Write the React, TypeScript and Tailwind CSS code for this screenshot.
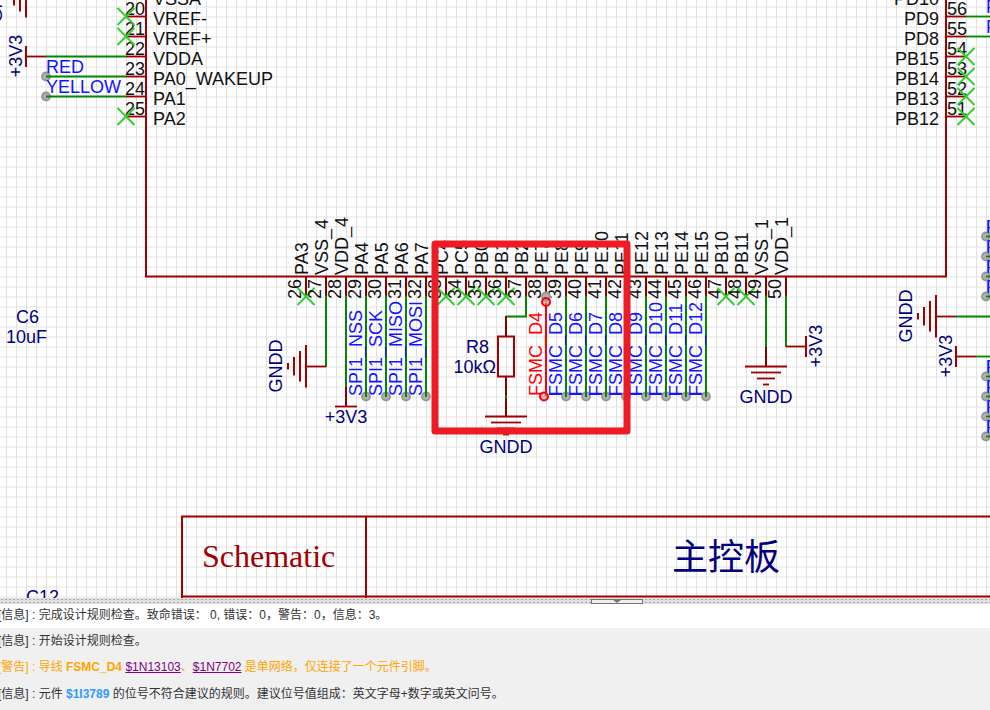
import React from "react";

const RED = "#a00000";
const PIN = "#880000";
const GREEN = "#008800";
const NAVY = "#000080";
const BLUE = "#1414ff";
const MARK = "#33cc33";

type LabelProps = {
  x: number;
  y: number;
  children: string;
  fill?: string;
  anchor?: "start" | "middle" | "end";
  up?: boolean;
};

function Label({ x, y, children, fill = "#111111", anchor = "start", up = false }: LabelProps) {
  return (
    <text
      x={x}
      y={y}
      fill={fill}
      textAnchor={anchor}
      transform={up ? `rotate(-90 ${x} ${y})` : undefined}
      className="text-[18px]"
    >
      {children}
    </text>
  );
}

type SegProps = { x1: number; y1: number; x2: number | string; y2: number; c: string; w?: number };

function Seg({ x1, y1, x2, y2, c, w = 2 }: SegProps) {
  return <line x1={x1} y1={y1} x2={x2} y2={y2} stroke={c} strokeWidth={w} />;
}

function NoConnect({ x, y }: { x: number; y: number }) {
  return (
    <path
      d={`M${x - 8.5} ${y - 8}l17 17M${x + 8.5} ${y - 8}l-17 17`}
      stroke={MARK}
      strokeWidth="2"
      fill="none"
    />
  );
}

function Dot({ x, y }: { x: number; y: number }) {
  return <circle cx={x} cy={y + 0.5} r="4" fill="#b0b0b0" stroke="#969696" strokeWidth="1.8" />;
}

/* Ground symbol: four shrinking bars, pointing down or left. */
function Ground({ x, y, left = false }: { x: number; y: number; left?: boolean }) {
  return (
    <g>
      {[21, 15, 9, 3].map((half, i) =>
        left ? (
          <Seg key={i} x1={x - i * 6} y1={y - half} x2={x - i * 6} y2={y + half + 0.5} c={RED} />
        ) : (
          <Seg key={i} x1={x - half} y1={y + i * 6 + 0.5} x2={x + half} y2={y + i * 6 + 0.5} c={RED} w={1.8} />
        )
      )}
    </g>
  );
}

const bottomPins = [
  "PA3", "VSS_4", "VDD_4", "PA4", "PA5", "PA6", "PA7", "PC4", "PC5", "PB0", "PB1", "PB2", "PE7",
  "PE8", "PE9", "PE10", "PE11", "PE12", "PE13", "PE14", "PE15", "PB10", "PB11", "VSS_1", "VDD_1",
].map((name, i) => ({ name, num: 26 + i, x: 306 + 20 * i }));

const openPins = [26, 33, 34, 35, 36, 47, 48];

const nets = [
  { name: "SPI1_NSS", x: 366 },
  { name: "SPI1_SCK", x: 386 },
  { name: "SPI1_MISO", x: 406 },
  { name: "SPI1_MOSI", x: 426 },
  { name: "FSMC_D5", x: 566 },
  { name: "FSMC_D6", x: 586 },
  { name: "FSMC_D7", x: 606 },
  { name: "FSMC_D8", x: 626 },
  { name: "FSMC_D9", x: 646 },
  { name: "FSMC_D10", x: 666 },
  { name: "FSMC_D11", x: 686 },
  { name: "FSMC_D12", x: 706 },
];

const leftPins = ["VSSA", "VREF-", "VREF+", "VDDA", "PA0_WAKEUP", "PA1", "PA2"].map((name, i) => ({
  name,
  num: 19 + i,
  y: -4 + 20 * i,
}));

const rightPins = ["PD10", "PD9", "PD8", "PB15", "PB14", "PB13", "PB12"].map((name, i) => ({
  name,
  num: 57 - i,
  y: -4 + 20 * i,
}));

function Schematic() {
  return (
    <svg
      className="block h-full w-full font-['Liberation_Sans','Noto_Sans_CJK_SC',sans-serif]"
      role="img"
      aria-label="Schematic"
    >
      <defs>
        <pattern id="grid" width="10" height="10" patternUnits="userSpaceOnUse">
          <rect x="0" y="6" width="10" height="2" fill="#f1f1f1" />
          <rect x="6" y="0" width="1" height="10" fill="#e0e0e0" />
        </pattern>
      </defs>
      <rect width="100%" height="100%" fill="#ffffff" />
      <rect width="100%" height="100%" fill="url(#grid)" />

      {/* chip outline */}
      <path d="M146 -10V276.5H946V-10" fill="none" stroke={RED} strokeWidth="2" />

      {/* left side pins */}
      {leftPins.map((p) => (
        <g key={p.num}>
          <Seg x1={126} y1={p.y + 0.5} x2={146} y2={p.y + 0.5} c={RED} w={1.8} />
          <Label x={145} y={p.y - 1} anchor="end">{String(p.num)}</Label>
          <Label x={153} y={p.y + 9}>{p.name}</Label>
        </g>
      ))}
      <NoConnect x={126} y={16} />
      <NoConnect x={126} y={36} />
      <NoConnect x={126} y={116} />
      <Seg x1={46} y1={56.5} x2={126} y2={56.5} c={GREEN} w={1.8} />
      <Seg x1={26} y1={56.5} x2={46} y2={56.5} c={RED} w={1.8} />
      <Seg x1={26} y1={46} x2={26} y2={67} c={RED} />
      <Label x={22} y={56} up anchor="middle" fill={NAVY}>+3V3</Label>
      <Dot x={46} y={76} />
      <Dot x={46} y={96} />
      <Seg x1={46} y1={76.5} x2={126} y2={76.5} c={GREEN} w={1.8} />
      <Seg x1={46} y1={96.5} x2={126} y2={96.5} c={GREEN} w={1.8} />
      <Label x={46} y={73} fill={BLUE}>RED</Label>
      <Label x={46} y={93} fill={BLUE}>YELLOW</Label>
      <Ground x={26} y={-4} left />
      <Label x={2} y={-4} up anchor="middle" fill={NAVY}>GNDD</Label>

      {/* right side pins */}
      {rightPins.map((p) => (
        <g key={p.num}>
          <Seg x1={946} y1={p.y + 0.5} x2={966} y2={p.y + 0.5} c={RED} w={1.8} />
          <Label x={947} y={p.y - 1}>{String(p.num)}</Label>
          <Label x={939} y={p.y + 9} anchor="end">{p.name}</Label>
        </g>
      ))}
      {[56, 76, 96, 116].map((y) => (
        <NoConnect key={y} x={966} y={y} />
      ))}
      {[16, 36].map((y) => (
        <g key={y}>
          <Seg x1={966} y1={y + 0.5} x2="100%" y2={y + 0.5} c={GREEN} w={1.8} />
          <Label x={986} y={y - 3} fill={BLUE}>F</Label>
        </g>
      ))}

      {/* bottom pins */}
      {bottomPins.map((p) => (
        <g key={p.num}>
          <Seg x1={p.x} y1={276} x2={p.x} y2={296} c={PIN} />
          <Label x={p.x - 5} y={299} up>{String(p.num)}</Label>
          <Label x={p.x + 2} y={275} up>{p.name}</Label>
          {openPins.includes(p.num) && <NoConnect x={p.x} y={296} />}
        </g>
      ))}

      {nets.map((n) => (
        <g key={n.name}>
          {n.x > 500 && <Seg x1={n.x - 17} y1={394.5} x2={n.x} y2={394.5} c={BLUE} w={1} />}
          <Dot x={n.x} y={396} />
          <Seg x1={n.x} y1={296} x2={n.x} y2={397} c={GREEN} />
          <Label x={n.x - 4} y={396} up fill={BLUE}>{n.name}</Label>
        </g>
      ))}

      {/* selected net */}
      <Dot x={546} y={296} />
      <Seg x1={546} y1={303} x2={546} y2={396} c="#ff0000" />
      <Label x={542} y={396} up fill="#ff0000">FSMC_D4</Label>
      <circle cx="546" cy="302" r="4" fill="#b09090" fillOpacity="0.6" stroke="#ff0000" strokeWidth="2" />
      <circle cx="544" cy="396.5" r="4" fill="#b09090" fillOpacity="0.6" stroke="#ff0000" strokeWidth="2" />

      {/* VSS_4 and VDD_4 supply */}
      <path d="M326 296V367" stroke={GREEN} strokeWidth="2" />
      <Seg x1={306} y1={366.5} x2={326} y2={366.5} c={RED} w={1.8} />
      <Ground x={306} y={366} left />
      <Label x={282} y={366} up anchor="middle" fill={NAVY}>GNDD</Label>
      <Seg x1={346} y1={296} x2={346} y2={387} c={GREEN} />
      <Seg x1={346} y1={387} x2={346} y2={406} c={PIN} />
      <Seg x1={335} y1={406.5} x2={357} y2={406.5} c={RED} w={1.8} />
      <Label x={346} y={423} anchor="middle" fill={NAVY}>+3V3</Label>

      {/* boot resistor */}
      <path d="M526 296V316.5H506" fill="none" stroke={GREEN} strokeWidth="2" />
      <Seg x1={506} y1={316} x2={506} y2={336} c={PIN} />
      <rect x="498" y="336.5" width="16" height="40" fill="none" stroke={RED} strokeWidth="2" />
      <Seg x1={506} y1={377} x2={506} y2={416} c={PIN} />
      <Seg x1={506} y1={395} x2={506} y2={398} c={GREEN} />
      <Ground x={506} y={416} />
      <Label x={506} y={453} anchor="middle" fill={NAVY}>GNDD</Label>
      <Label x={489} y={353} anchor="end" fill={NAVY}>R8</Label>
      <Label x={496} y={373} anchor="end" fill={NAVY}>10kΩ</Label>

      {/* VSS_1 and VDD_1 supply */}
      <Seg x1={766} y1={296} x2={766} y2={347} c={GREEN} />
      <Seg x1={766} y1={347} x2={766} y2={366} c={PIN} />
      <Ground x={766} y={366} />
      <Label x={766} y={403} anchor="middle" fill={NAVY}>GNDD</Label>
      <Seg x1={786} y1={296} x2={786} y2={347} c={GREEN} />
      <Seg x1={786} y1={346.5} x2={806} y2={346.5} c={RED} w={1.8} />
      <Seg x1={806} y1={336} x2={806} y2={357} c={RED} />
      <Label x={822} y={346} up anchor="middle" fill={NAVY}>+3V3</Label>

      {/* connector supply on the right */}
      <Ground x={936} y={316} left />
      <Seg x1={936} y1={316.5} x2={956} y2={316.5} c={RED} w={1.8} />
      <Seg x1={956} y1={316.5} x2="100%" y2={316.5} c={GREEN} w={1.8} />
      <Label x={912} y={316} up anchor="middle" fill={NAVY}>GNDD</Label>
      <Seg x1={956} y1={346} x2={956} y2={367} c={RED} />
      <Seg x1={956} y1={356.5} x2={976} y2={356.5} c={RED} w={1.8} />
      <Seg x1={976} y1={356.5} x2="100%" y2={356.5} c={GREEN} w={1.8} />
      <Label x={952} y={356} up anchor="middle" fill={NAVY}>+3V3</Label>
      <Seg x1={988} y1={220} x2={988} y2={296} c={BLUE} w={1} />
      <Seg x1={988} y1={360} x2={988} y2={436} c={BLUE} w={1} />
      {[236, 256, 276, 296, 376, 396, 416, 436].map((y) => (
        <g key={y}>
          <Dot x={986} y={y} />
          <Seg x1={986} y1={y + 0.5} x2="100%" y2={y + 0.5} c={GREEN} w={1.8} />
          <Label x={986} y={y - 3} fill={BLUE}>F</Label>
        </g>
      ))}

      {/* loose capacitors */}
      <Label x={16} y={323} fill={NAVY}>C6</Label>
      <Label x={6} y={343} fill={NAVY}>10uF</Label>
      <Label x={26} y={603} fill={NAVY}>C12</Label>

      {/* title block */}
      <Seg x1={181} y1={516.5} x2="100%" y2={516.5} c={RED} />
      <Seg x1={181} y1={596.5} x2="100%" y2={596.5} c={RED} />
      <Seg x1={182} y1={516} x2={182} y2={598} c={RED} />
      <Seg x1={366} y1={516} x2={366} y2={598} c={RED} />
      <text x="202" y="567" fill={RED} className="font-['Liberation_Serif',serif] text-[32px]">
        Schematic
      </text>
      <text x="672" y="570" fill={NAVY} className="text-[36px]">
        主控板
      </text>

      {/* highlight frame */}
      <rect x="435" y="244" width="192" height="187" fill="none" stroke="#ed1c24" strokeWidth="7" strokeLinejoin="round" />
    </svg>
  );
}

export default function App() {
  return (
    <div className="flex h-screen flex-col overflow-hidden bg-white">
      <main className="min-h-0 flex-1 overflow-hidden">
        <Schematic />
      </main>
      <div className="flex h-[6px] shrink-0 justify-center bg-[#e0e0e0] bg-[radial-gradient(#a8a8a8_1px,transparent_1px)] bg-size-[4px_3px] pl-[244px]">
        <button
          type="button"
          aria-label="Collapse panel"
          className="flex h-[5px] w-[52px] items-center justify-center self-end border border-[#7d7272] bg-[#eef0ea]"
        >
          <svg width="8" height="3" viewBox="0 0 8 3" aria-hidden="true">
            <path d="M0 0H8L4 3Z" fill="#7d7272" />
          </svg>
        </button>
      </div>
      <section className="-ml-0.5 shrink-0 bg-[#f0f0f0] pb-[3px] font-['Liberation_Sans','Noto_Sans_CJK_SC',sans-serif] text-[12px] whitespace-pre text-[#333333]">
        <p className="h-6 bg-white leading-[22px]">[信息] : 完成设计规则检查。致命错误： 0, 错误：0，警告：0，信息：3。</p>
        <p className="h-[26px] leading-[26px]">[信息] : 开始设计规则检查。</p>
        <p className="h-[26px] leading-[26px] text-[#ffa500]">
          [警告] : 导线 <b>FSMC_D4</b>{" "}
          <a href="#n13103" className="text-[#800080] underline">$1N13103</a>、
          <a href="#n7702" className="text-[#800080] underline">$1N7702</a> 是单网络，仅连接了一个元件引脚。
        </p>
        <p className="h-[27px] leading-[28px]">
          [信息] : 元件 <a href="#i3789" className="font-bold text-[#3399ff]">$1I3789</a> 的位号不符合建议的规则。建议位号值组成：英文字母+数字或英文问号。
        </p>
      </section>
    </div>
  );
}
